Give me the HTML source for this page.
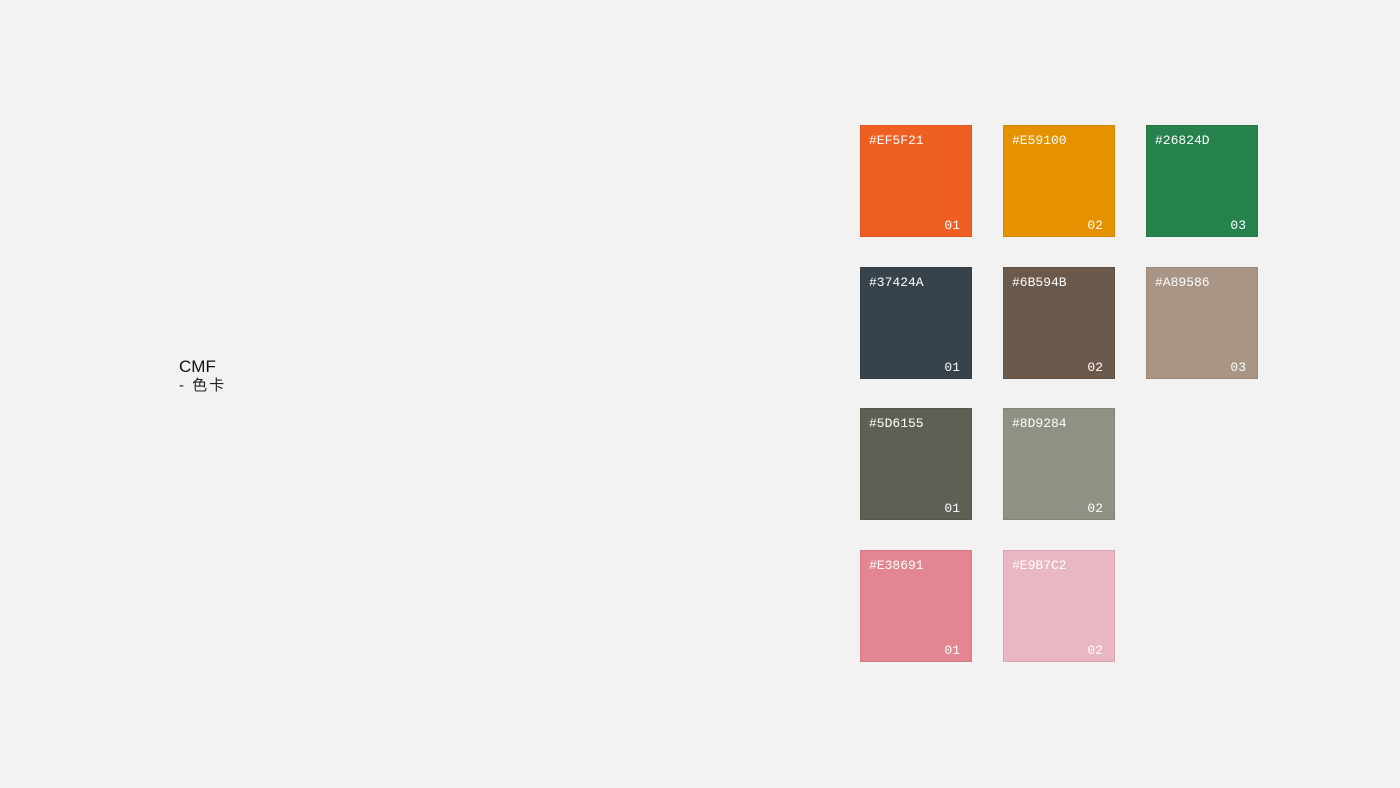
<!DOCTYPE html>
<html><head><meta charset="utf-8"><style>
body{margin:0;width:1400px;height:788px;background:#f2f2f2;position:relative;overflow:hidden;font-family:"Liberation Sans","Noto Sans CJK SC",sans-serif}
.t{position:absolute;left:179px;top:357px;font-size:17px;color:#111;line-height:20px}
.s{position:absolute;left:179px;top:377px;font-size:15px;color:#222;line-height:18px;letter-spacing:2px}
.b{position:absolute;width:112px;height:112px;box-shadow:inset 0 0 0 1px rgba(0,0,0,0.08);font-family:"Liberation Mono",monospace;font-size:13px;color:#fff}
.b .h{position:absolute;left:9px;top:8px}
.b .n{position:absolute;right:12px;bottom:4px}
</style></head><body>
<div class="t">CMF</div>
<div class="s">- 色卡</div>
<div class="b" style="left:860px;top:125px;background:#EF5F21"><span class="h">#EF5F21</span><span class="n">01</span></div>
<div class="b" style="left:1003px;top:125px;background:#E59100"><span class="h">#E59100</span><span class="n">02</span></div>
<div class="b" style="left:1146px;top:125px;background:#26824D"><span class="h">#26824D</span><span class="n">03</span></div>
<div class="b" style="left:860px;top:267px;background:#37424A"><span class="h">#37424A</span><span class="n">01</span></div>
<div class="b" style="left:1003px;top:267px;background:#6B594B"><span class="h">#6B594B</span><span class="n">02</span></div>
<div class="b" style="left:1146px;top:267px;background:#A89586"><span class="h">#A89586</span><span class="n">03</span></div>
<div class="b" style="left:860px;top:408px;background:#5D6155"><span class="h">#5D6155</span><span class="n">01</span></div>
<div class="b" style="left:1003px;top:408px;background:#8D9284"><span class="h">#8D9284</span><span class="n">02</span></div>
<div class="b" style="left:860px;top:550px;background:#E38691"><span class="h">#E38691</span><span class="n">01</span></div>
<div class="b" style="left:1003px;top:550px;background:#E9B7C2"><span class="h">#E9B7C2</span><span class="n">02</span></div>
</body></html>
